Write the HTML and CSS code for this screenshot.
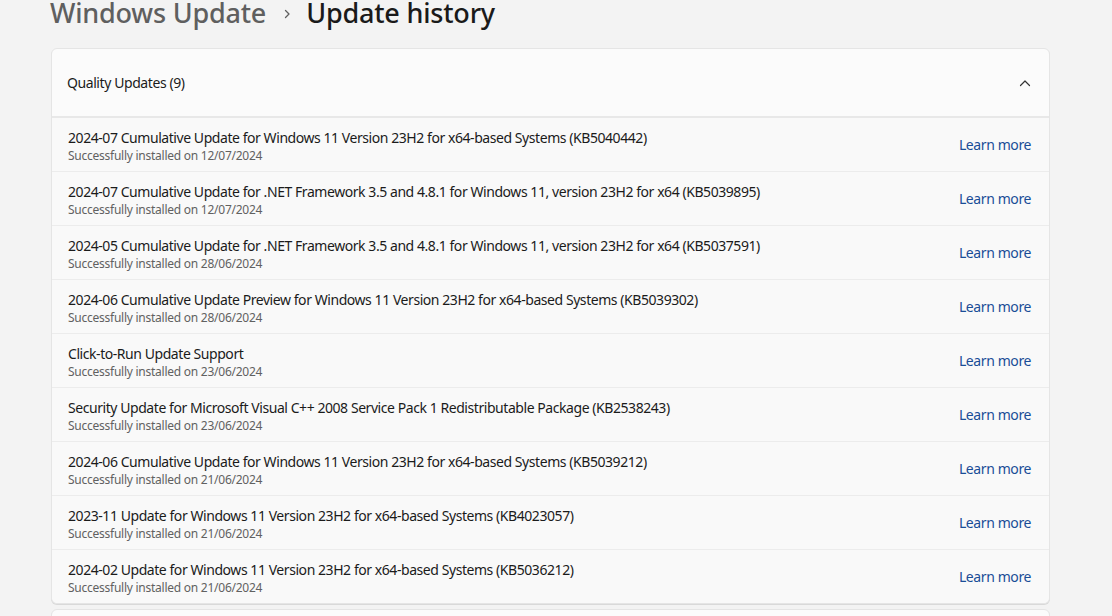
FILE: index.html
```html
<!DOCTYPE html>
<html>
<head>
<meta charset="utf-8">
<link rel="stylesheet" href="styles.css">
</head>
<body>
<div class="page">
  <h1 class="crumbs"><span class="crumb-parent">Windows Update</span><span class="crumb-sep"><svg width="12" height="12" viewBox="0 0 12 12"><path d="M4.5 2.5 L8 6 L4.5 9.5" fill="none" stroke="#5f5f5f" stroke-width="1.3" stroke-linecap="round" stroke-linejoin="round"/></svg></span><span class="crumb-current">Update history</span></h1>

  <section class="expander">
    <div class="exp-head">
      <span class="exp-title">Quality Updates (9)</span>
      <svg class="exp-chevron" width="14" height="14" viewBox="0 0 14 14"><path d="M2.5 9.5 L7 5 L11.5 9.5" fill="none" stroke="#333" stroke-width="1.2" stroke-linecap="round" stroke-linejoin="round"/></svg>
    </div>
    <div class="exp-body">
      <div class="row"><div class="info"><div class="name">2024-07 Cumulative Update for Windows 11 Version 23H2 for x64-based Systems (KB5040442)</div><div class="status">Successfully installed on 12/07/2024</div></div><a class="link">Learn more</a></div>
      <div class="row"><div class="info"><div class="name">2024-07 Cumulative Update for .NET Framework 3.5 and 4.8.1 for Windows 11, version 23H2 for x64 (KB5039895)</div><div class="status">Successfully installed on 12/07/2024</div></div><a class="link">Learn more</a></div>
      <div class="row"><div class="info"><div class="name">2024-05 Cumulative Update for .NET Framework 3.5 and 4.8.1 for Windows 11, version 23H2 for x64 (KB5037591)</div><div class="status">Successfully installed on 28/06/2024</div></div><a class="link">Learn more</a></div>
      <div class="row"><div class="info"><div class="name">2024-06 Cumulative Update Preview for Windows 11 Version 23H2 for x64-based Systems (KB5039302)</div><div class="status">Successfully installed on 28/06/2024</div></div><a class="link">Learn more</a></div>
      <div class="row"><div class="info"><div class="name">Click-to-Run Update Support</div><div class="status">Successfully installed on 23/06/2024</div></div><a class="link">Learn more</a></div>
      <div class="row"><div class="info"><div class="name">Security Update for Microsoft Visual C++ 2008 Service Pack 1 Redistributable Package (KB2538243)</div><div class="status">Successfully installed on 23/06/2024</div></div><a class="link">Learn more</a></div>
      <div class="row"><div class="info"><div class="name">2024-06 Cumulative Update for Windows 11 Version 23H2 for x64-based Systems (KB5039212)</div><div class="status">Successfully installed on 21/06/2024</div></div><a class="link">Learn more</a></div>
      <div class="row"><div class="info"><div class="name">2023-11 Update for Windows 11 Version 23H2 for x64-based Systems (KB4023057)</div><div class="status">Successfully installed on 21/06/2024</div></div><a class="link">Learn more</a></div>
      <div class="row"><div class="info"><div class="name">2024-02 Update for Windows 11 Version 23H2 for x64-based Systems (KB5036212)</div><div class="status">Successfully installed on 21/06/2024</div></div><a class="link">Learn more</a></div>
    </div>
  </section>

  <section class="expander next"></section>
</div>
</body>
</html>
```

FILE: styles.css
```css
html {
  overflow: hidden;
  background: #f3f3f3;
}
body {
  margin: 0;
  padding: 0;
  background: #f3f3f3;
  font-family: "Noto Sans", "Open Sans", sans-serif;
  color: #1b1b1b;
}
.page {
  padding: 0 62px 0 51px;
}
.crumbs {
  margin: -23px 0 0 -1px;
  height: 71px;
  display: flex;
  align-items: center;
  font-size: 27px;
  font-weight: 500;
  line-height: 36px;
  letter-spacing: -0.2px;
}
.crumb-parent { color: #5f5f5f; }
.crumb-sep { display: flex; align-items: center; margin: 2px 13px 0 15px; }
.crumb-current { color: #1a1a1a; }
.expander {
  background: #fbfbfb;
  border: 1px solid #e5e5e5;
  border-radius: 6px;
  box-shadow: 0 1px 0 #d9d9d9;
}
.exp-head {
  height: 67px;
  display: flex;
  align-items: center;
  justify-content: space-between;
  padding: 0 17px 0 15px;
  border-bottom: 2px solid #e8e8e8;
}
.exp-title { font-size: 14px; letter-spacing: -0.42px; }
.exp-body {
  background: #f9f9f9;
  border-radius: 0 0 6px 6px;
}
.row {
  height: 53px;
  display: flex;
  align-items: center;
  justify-content: space-between;
  padding: 0 18px 0 16px;
  border-top: 1px solid #ececec;
}
.row:first-child { border-top: none; }
.info { display: flex; flex-direction: column; margin-top: 4px; }
.name { font-size: 14px; line-height: 18px; color: #1b1b1b; letter-spacing: -0.44px; }
.status { font-size: 12px; line-height: 18px; color: #616161; letter-spacing: -0.25px; }
.link { font-size: 14px; color: #1a4d97; cursor: pointer; letter-spacing: -0.4px; }
.next { margin-top: 5px; height: 40px; }
```
